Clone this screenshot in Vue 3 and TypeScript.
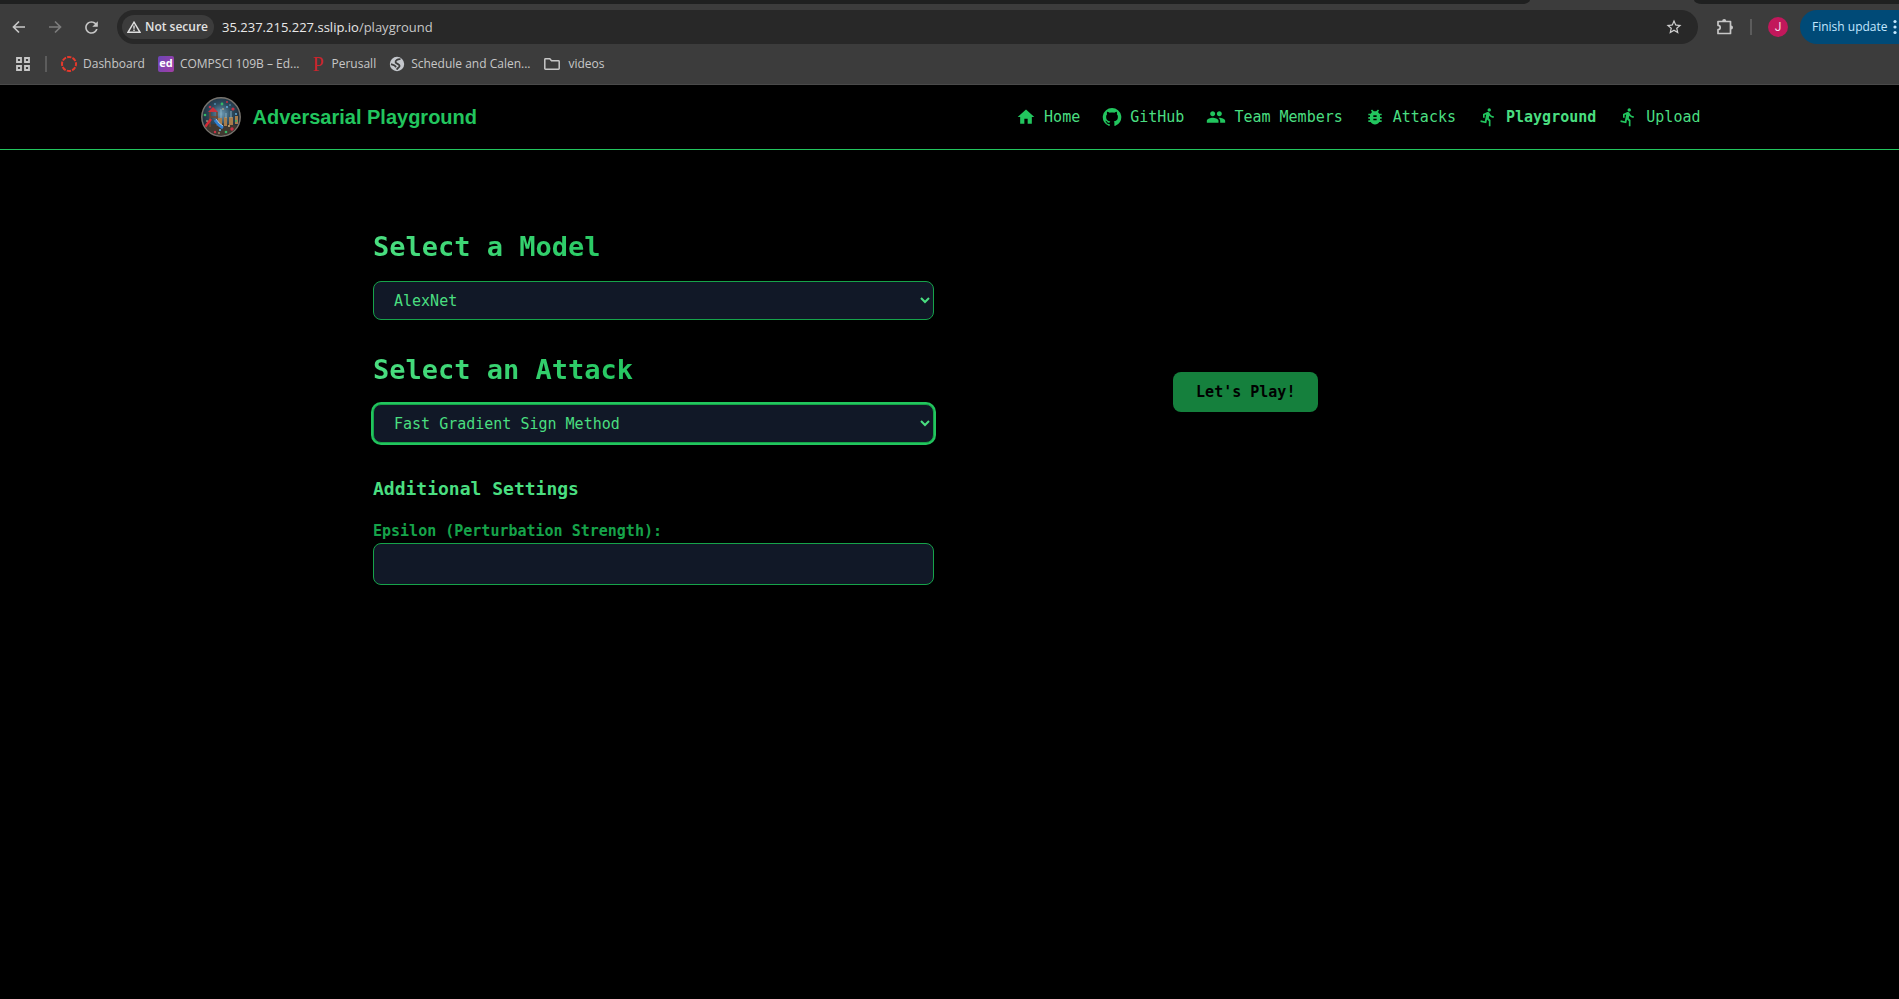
<script setup lang="ts">
import { ref } from 'vue'

interface NavItem {
  label: string
  icon: string
  active?: boolean
}

const runPath =
  'M13.49 5.48c1.1 0 2-.9 2-2s-.9-2-2-2-2 .9-2 2 .9 2 2 2zm-3.6 13.9l1-4.4 2.1 2v6h2v-7.5l-2.1-2 .6-3c1.3 1.5 3.3 2.5 5.5 2.5v-2c-1.9 0-3.5-1-4.3-2.4l-1-1.6c-.4-.6-1-1-1.7-1-.3 0-.5.1-.8.1l-5.2 2.2v4.7h2v-3.4l1.8-.7-1.6 8.1-4.9-1-.4 2 7 1.4z'

const navItems: NavItem[] = [
  { label: 'Home', icon: 'M10 20v-6h4v6h5v-8h3L12 3 2 12h3v8z' },
  {
    label: 'GitHub',
    icon: 'M12 1.27a11 11 0 00-3.48 21.46c.55.09.73-.28.73-.55v-1.84c-3.03.64-3.67-1.46-3.67-1.46-.55-1.29-1.28-1.65-1.28-1.65-.92-.65.1-.65.1-.65 1.1 0 1.73 1.1 1.73 1.1.92 1.65 2.57 1.2 3.21.92a2 2 0 01.64-1.47c-2.47-.27-5.04-1.19-5.04-5.5 0-1.1.46-2.1 1.2-2.84a3.76 3.76 0 010-2.93s.91-.28 3.11 1.1c1.8-.49 3.7-.49 5.5 0 2.1-1.38 3.02-1.1 3.02-1.1a3.76 3.76 0 01.1 2.93c.83.74 1.2 1.74 1.2 2.94 0 4.21-2.57 5.13-5.04 5.4.45.37.82.92.82 2.02v3.03c0 .27.1.64.73.55A11 11 0 0012 1.27'
  },
  {
    label: 'Team Members',
    icon: 'M16 11c1.66 0 2.99-1.34 2.99-3S17.66 5 16 5c-1.66 0-3 1.34-3 3s1.34 3 3 3zm-8 0c1.66 0 2.99-1.34 2.99-3S9.66 5 8 5C6.34 5 5 6.34 5 8s1.34 3 3 3zm0 2c-2.33 0-7 1.17-7 3.5V19h14v-2.5c0-2.33-4.67-3.5-7-3.5zm8 0c-.29 0-.62.02-.97.05 1.16.84 1.97 1.97 1.97 3.45V19h6v-2.5c0-2.33-4.67-3.5-7-3.5z'
  },
  {
    label: 'Attacks',
    icon: 'M20 8h-2.81c-.45-.78-1.07-1.45-1.82-1.96L17 4.41 15.59 3l-2.17 2.17C12.96 5.06 12.49 5 12 5s-.96.06-1.41.17L8.41 3 7 4.41l1.62 1.63C7.88 6.55 7.26 7.22 6.81 8H4v2h2.09c-.05.33-.09.66-.09 1v1H4v2h2v1c0 .34.04.67.09 1H4v2h2.81c1.04 1.79 2.97 3 5.19 3s4.15-1.21 5.19-3H20v-2h-2.09c.05-.33.09-.66.09-1v-1h2v-2h-2v-1c0-.34-.04-.67-.09-1H20V8zm-6 8h-4v-2h4v2zm0-4h-4v-2h4v2z'
  },
  { label: 'Playground', icon: runPath, active: true },
  { label: 'Upload', icon: runPath }
]

const url = ref('35.237.215.227.sslip.io')
const model = ref('AlexNet')
const attack = ref('Fast Gradient Sign Method')
const epsilon = ref('')
</script>

<template>
  <div class="browser">
    <div class="tabstrip"><span class="tabs-left"></span><span class="tabs-right"></span></div>
    <div class="toolbar">
      <button class="tool" type="button" aria-label="Back">
        <svg viewBox="0 0 16 16" width="16" height="16"><path d="M14 8H3M8 2.5L2.5 8 8 13.5" fill="none" stroke="#c7c7c7" stroke-width="1.7" /></svg>
      </button>
      <button class="tool" type="button" aria-label="Forward">
        <svg viewBox="0 0 16 16" width="16" height="16"><path d="M2 8h11M8 2.5L13.5 8 8 13.5" fill="none" stroke="#7c7c7c" stroke-width="1.7" /></svg>
      </button>
      <button class="tool" type="button" aria-label="Reload">
        <svg viewBox="0 0 24 24" width="19" height="19"><path fill="#c7c7c7" d="M17.65 6.35C16.2 4.9 14.21 4 12 4c-4.42 0-7.99 3.58-7.99 8s3.57 8 7.99 8c3.73 0 6.84-2.55 7.73-6h-2.08c-.82 2.33-3.04 4-5.65 4-3.31 0-6-2.69-6-6s2.69-6 6-6c1.66 0 3.14.69 4.22 1.78L13 11h7V4l-2.35 2.35z" /></svg>
      </button>
      <div class="omnibox">
        <button class="chip" type="button">
          <svg viewBox="0 0 14 12" width="14" height="12"><path d="M7 1.2L13 11.3H1z" fill="none" stroke="#dedede" stroke-width="1.4" /><path d="M7 4.5v3.2M7 8.6v1.4" stroke="#dedede" stroke-width="1.4" /></svg>
          <span>Not secure</span>
        </button>
        <a class="url" href="#"><span class="host">{{ url }}</span>/playground</a>
        <button class="star" type="button" aria-label="Bookmark this tab">
          <svg viewBox="0 0 24 24" width="18" height="18"><path fill="#d0d0d0" d="M22 9.24l-7.19-.62L12 2 9.19 8.63 2 9.24l5.46 4.73L5.82 21 12 17.27 18.18 21l-1.63-7.03L22 9.24zM12 15.4l-3.76 2.27 1-4.28-3.32-2.88 4.38-.38L12 6.1l1.71 4.04 4.38.38-3.32 2.88 1 4.28L12 15.4z" /></svg>
        </button>
      </div>
      <button class="tool ext" type="button" aria-label="Extensions">
        <svg viewBox="0 0 18 18" width="18" height="18"><path d="M2 3.5h12.5v12H2v-3.8a2.2 2.2 0 0 0 0-4.4z" fill="none" stroke="#c7c7c7" stroke-width="1.7" stroke-linejoin="round" /><path d="M6.2 3a2 2 0 0 1 4 0zM15 7.5a2 2 0 0 1 0 4z" fill="#c7c7c7" /></svg>
      </button>
      <span class="divider"></span>
      <button class="avatar" type="button">J</button>
      <button class="update" type="button">
        <span>Finish update</span>
        <svg viewBox="0 0 4 16" width="4" height="16" fill="#c2e7ff"><circle cx="2" cy="2.5" r="1.6" /><circle cx="2" cy="8" r="1.6" /><circle cx="2" cy="13.5" r="1.6" /></svg>
      </button>
    </div>
    <nav class="bookmarks" aria-label="Bookmarks">
      <button class="apps" type="button" aria-label="Apps">
        <svg viewBox="0 0 14 14" width="14" height="14" fill="none" stroke="#c7c7c7" stroke-width="1.8"><path d="M1 1h4v4H1zM9 1h4v4H9zM1 9h4v4H1zM9 9h4v4H9z" /></svg>
      </button>
      <span class="divider"></span>
      <a class="mark" href="#">
        <svg viewBox="0 0 16 16" width="16" height="16"><circle cx="8" cy="8" r="7" fill="none" stroke="#e5392c" stroke-width="2" stroke-dasharray="4.3 1.198" stroke-dashoffset="2.1" /></svg>
        <span>Dashboard</span>
      </a>
      <a class="mark" href="#"><span class="ed">ed</span><span>COMPSCI 109B – Ed...</span></a>
      <a class="mark" href="#"><span class="perusall">P</span><span>Perusall</span></a>
      <a class="mark" href="#">
        <svg viewBox="0 0 16 16" width="16" height="16"><circle cx="8" cy="8" r="7.2" fill="#c4c7cc" /><path d="M11.5 3.2C8.500 3 6.200 4.400 6.600 6.200S10.800 8 10.600 10 8.500 11.600 7.800 13.600M2 8.200l3.500 1.200 1.600 1.800" fill="none" stroke="#3c3c3c" stroke-width="1.8" /></svg>
        <span>Schedule and Calen...</span>
      </a>
      <a class="mark folder" href="#">
        <svg viewBox="0 0 18 14" width="18" height="14"><path d="M2.5 1.800h4.300l1.700 2h7a.7.7 0 0 1 .7.7v7a.7.7 0 0 1-.7.7h-13a.7.7 0 0 1-.7-.7v-9a.7.7 0 0 1 .7-.7z" fill="none" stroke="#c7c7c7" stroke-width="1.5" /></svg>
        <span>videos</span>
      </a>
    </nav>
  </div>

  <header class="site-header">
    <div class="header-inner">
      <a class="brand" href="#">
        <svg viewBox="0 0 40 40" width="40" height="40">
          <defs>
            <radialGradient id="sky" cx="50%" cy="42%" r="55%">
              <stop offset="0" stop-color="#6f9bb5" />
              <stop offset=".5" stop-color="#2d4c60" />
              <stop offset="1" stop-color="#1c2530" />
            </radialGradient>
            <clipPath id="disc"><circle cx="20" cy="20" r="18.5" /></clipPath>
          </defs>
          <circle cx="20" cy="20" r="19.2" fill="url(#sky)" stroke="#77736d" stroke-width="1.5" />
          <g clip-path="url(#disc)">
            <path d="M3 29q17-5 35 0v12H3z" fill="#40382f" />
            <path d="M17 21h4v8h-4zM23 20h3v9h-3zM28 20h4v8h-4zM34 19h3v8h-3z" fill="#a77c4b" />
            <path d="M19 12h2v9h-2zM24 16h2v5h-2zM29 14h2v7h-2z" fill="#8cb5c8" opacity=".45" />
            <path d="M9 15v15M16 15v14M9 20h8" stroke="#70442d" stroke-width="1.5" />
            <path d="M7 15l5-5 5 5z" fill="#c9303b" />
            <path d="M10 22l-6 8" stroke="#d32a35" stroke-width="2.5" />
            <path d="M14 23q3 5 8 8" fill="none" stroke="#317fcf" stroke-width="3" />
            <path d="M15 22q3 5 7 7" fill="none" stroke="#a3cdef" stroke-width="1" />
            <g fill="#c83145"><circle cx="9" cy="10" r="1.3" /><circle cx="32" cy="12" r="1.6" /><circle cx="31" cy="32" r="1.7" /><circle cx="14" cy="35" r="1.2" /><circle cx="26" cy="5" r="1" /></g>
            <g fill="#35b967"><circle cx="21" cy="7" r="1.4" /><circle cx="4" cy="18" r="1.3" /><circle cx="25" cy="35" r="1.3" /><circle cx="35" cy="24" r="1" /></g>
            <g fill="#6bb9e8"><circle cx="14" cy="7" r=".8" /><circle cx="26" cy="10" r=".9" /><circle cx="35" cy="17" r=".9" /><circle cx="19" cy="33" r="1" /><circle cx="29" cy="8" r=".7" /></g>
            <g fill="#e0c08c"><circle cx="18" cy="36" r=".8" /><circle cx="28" cy="29" r=".9" /><circle cx="6" cy="24" r=".8" /><circle cx="22" cy="12" r=".8" /></g>
          </g>
        </svg>
        <span>Adversarial Playground</span>
      </a>
      <nav class="links" aria-label="Main">
        <a v-for="item in navItems" :key="item.label" href="#" :class="{ active: item.active }">
          <svg viewBox="0 0 24 24" width="20" height="20"><path :d="item.icon" /></svg>
          <span>{{ item.label }}</span>
        </a>
      </nav>
    </div>
  </header>

  <main class="content">
    <form class="settings" @submit.prevent>
      <section>
        <h2><label for="model">Select a Model</label></h2>
        <select id="model" v-model="model">
          <option>AlexNet</option>
        </select>
      </section>
      <section>
        <h2><label for="attack">Select an Attack</label></h2>
        <select id="attack" v-model="attack" class="current">
          <option>Fast Gradient Sign Method</option>
        </select>
      </section>
      <section>
        <h3>Additional Settings</h3>
        <label class="field-label" for="epsilon">Epsilon (Perturbation Strength):</label>
        <input id="epsilon" v-model="epsilon" type="text" />
      </section>
    </form>
    <div class="action"><button class="play" type="button">Let's Play!</button></div>
  </main>
</template>

<style>
body {
  margin: 0;
  background: #000;
}
</style>

<style scoped>
* {
  box-sizing: border-box;
}
a {
  color: inherit;
  text-decoration: none;
}
button {
  border: 0;
  padding: 0;
  background: none;
  color: inherit;
  font: inherit;
}
svg {
  display: block;
  flex: none;
}
.browser {
  overflow: hidden;
  background: #3c3c3c;
  color: #c7c7c7;
  font: 12px/16px "Open Sans", "Noto Sans", sans-serif;
  border-bottom: 1px solid #4a4a4a;
}
.tabstrip {
  display: flex;
  gap: 164px;
  height: 4px;
}
.tabs-left,
.tabs-right {
  background: #1f2020;
}
.tabs-left {
  flex: 1;
  border-bottom-right-radius: 8px 4px;
}
.tabs-right {
  width: 205px;
  border-bottom-left-radius: 8px 4px;
}
.toolbar {
  display: flex;
  align-items: center;
  height: 46px;
}
.tool {
  display: grid;
  place-items: center;
  flex: none;
  width: 36px;
  height: 34px;
}
.toolbar > .tool:first-child {
  margin-left: 1px;
}
.omnibox {
  display: flex;
  align-items: center;
  flex: 1;
  height: 34px;
  margin-left: 8px;
  padding: 0 15px 0 5px;
  border-radius: 17px;
  background: #282828;
}
.chip {
  display: flex;
  align-items: center;
  gap: 4px;
  height: 24px;
  padding: 0 6px 0 5px;
  border-radius: 12px;
  background: #3c3c3c;
  color: #e3e3e3;
  font-weight: 600;
}
.url {
  flex: 1;
  margin-left: 8px;
  color: #c7c7c7;
  font-size: 13px;
}
.host {
  color: #e8e8e8;
}
.ext {
  margin-left: 9px;
}
.divider {
  flex: none;
  width: 2px;
  height: 16px;
  background: #5c5c5c;
}
.toolbar .divider {
  margin: 0 16px 0 7px;
}
.avatar {
  flex: none;
  width: 20px;
  height: 20px;
  border-radius: 50%;
  background: #c2185b;
  color: #f3dce5;
  font-family: Roboto, sans-serif;
  text-align: center;
}
.update {
  display: flex;
  align-items: center;
  justify-content: space-between;
  flex: none;
  width: 99px;
  height: 34px;
  margin-left: 12px;
  padding: 0 2px 0 12px;
  border-radius: 17px 0 0 17px;
  background: #004a77;
  color: #c2e7ff;
  white-space: nowrap;
}
.bookmarks {
  display: flex;
  align-items: center;
  gap: 13px;
  height: 34px;
  padding: 0 0 6px 16px;
}
.bookmarks .divider {
  margin: 0 1px 0 2px;
}
.mark {
  display: flex;
  align-items: center;
  gap: 6px;
  white-space: nowrap;
}
.folder {
  gap: 7px;
}
.ed {
  width: 16px;
  height: 16px;
  border-radius: 2px;
  background: linear-gradient(120deg, #6b46b8, #a33fa4);
  color: #fff;
  font-size: 11px;
  font-weight: 700;
  line-height: 14px;
  text-align: center;
}
.perusall {
  width: 13px;
  color: #c9252d;
  font: 20px/16px "Liberation Serif", serif;
}
.site-header {
  border-bottom: 1px solid #22c55e;
  background: #000;
}
.header-inner {
  display: flex;
  align-items: center;
  justify-content: space-between;
  max-width: 1536px;
  height: 64px;
  margin: 0 auto;
  padding: 0 17px 0 19px;
}
.brand {
  display: flex;
  align-items: center;
  gap: 12px;
  color: #22c55e;
  font: bold 20px/28px "Liberation Sans", Arial, sans-serif;
  white-space: nowrap;
}
.links {
  display: flex;
  gap: 22px;
  color: #4ade80;
  font: 15px/24px "DejaVu Sans Mono", monospace;
  white-space: nowrap;
}
.links a {
  display: flex;
  align-items: center;
  gap: 8px;
}
.links svg {
  fill: #22c55e;
}
.links .active {
  font-weight: 700;
}
.content {
  display: grid;
  grid-template-columns: 1fr 1fr;
  gap: 32px;
  max-width: 1153px;
  margin: 0 auto;
  padding-top: 48px;
  font: 15px/24px "DejaVu Sans Mono", monospace;
}
.settings {
  display: flex;
  flex-direction: column;
  gap: 32px;
  padding-top: 31px;
}
h2,
h3 {
  margin: 0;
  font-weight: 700;
}
h2 {
  margin-bottom: 16px;
  background: linear-gradient(to right, #4ade80, #22c55e, #16a34a);
  background-clip: text;
  color: transparent;
  font-size: 27px;
  line-height: 36px;
}
h3 {
  margin-bottom: 16px;
  color: #4ade80;
  font-size: 18px;
  line-height: 28px;
}
select,
input {
  display: block;
  width: 100%;
  border: 1px solid #16a34a;
  border-radius: 8px;
  background-color: #111827;
  color: #4ade80;
  font: inherit;
  outline: none;
}
select {
  height: 39px;
  padding: 0 16px;
}
input {
  height: 42px;
  padding: 8px 16px;
}
.current {
  box-shadow: 0 0 0 2px #22c55e;
}
.field-label {
  display: block;
  color: #16a34a;
  font-weight: 700;
}
.action {
  display: grid;
  place-items: center;
}
.play {
  height: 40px;
  padding: 0 23px;
  border-radius: 8px;
  background: #15803d;
  color: #000;
  font-weight: 700;
}
</style>
